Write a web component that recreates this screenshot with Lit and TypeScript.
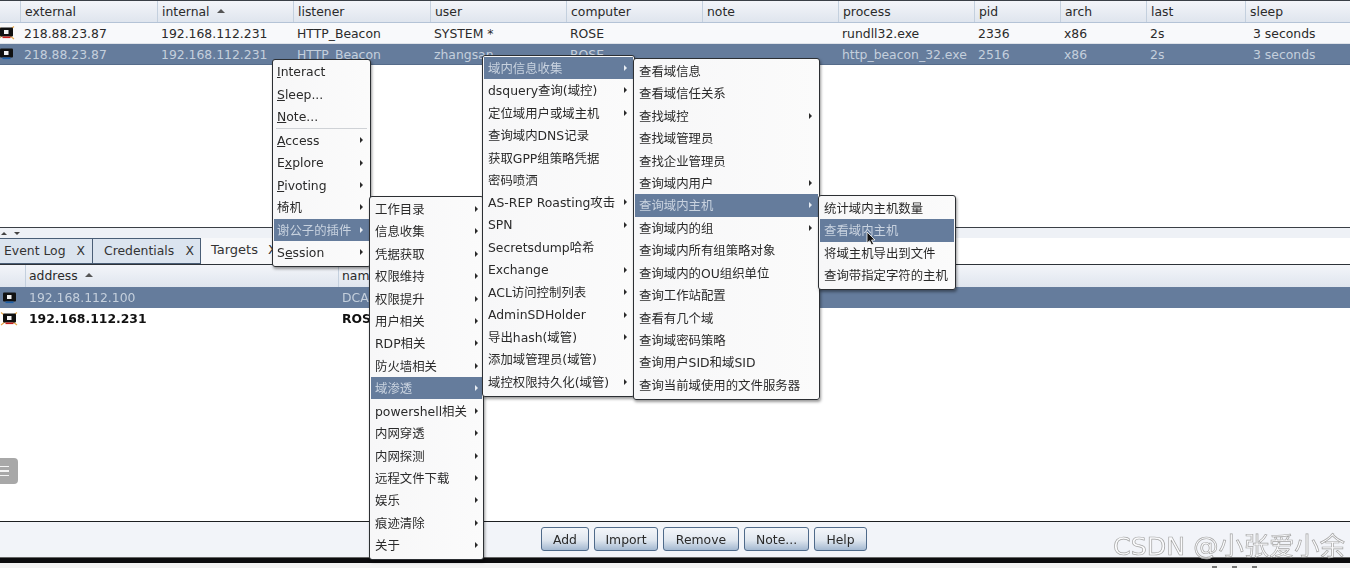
import { LitElement, html, css, svg } from "lit";
import { customElement } from "lit/decorators.js";

type Item = { t: string; sub?: boolean; sel?: boolean; sep?: boolean };
const I = (t: string, sub = false, sel = false): Item => ({ t, sub, sel });

const label = (t: string) => {
  const i = t.indexOf("_");
  if (i < 0) return t;
  return html`${t.slice(0, i)}<u>${t[i + 1]}</u>${t.slice(i + 2)}`;
};

const monitor = (flag: boolean, sel: boolean) => html`<svg class="mon" width="18" height="14" viewBox="0 0 18 14">
  ${flag
    ? svg`<path d="M1 0.5 L17 13 M17 0.5 L1 13" stroke="#e8a84a" stroke-width="1.2" />`
    : ""}
  <rect x="3" y="1.5" width="13" height="9" rx="1" fill="#111" />
  <rect x="7" y="4" width="4.5" height="4" fill="#f2f2f2" />
  <rect x="5.5" y="10.5" width="8" height="1.6" fill="${sel ? "#1d5fa8" : "#c8201c"}" />
</svg>`;

const MENUS: { cls: string; items: Item[] }[] = [
  {
    cls: "m1",
    items: [
      I("_Interact"), I("_Sleep..."), I("_Note..."), { t: "", sep: true },
      I("_Access", true), I("E_xplore", true), I("_Pivoting", true), I("椅机", true),
      I("谢公子的插件", true, true), I("S_ession", true),
    ],
  },
  {
    cls: "m2",
    items: [
      I("工作目录", true), I("信息收集", true), I("凭据获取", true), I("权限维持", true),
      I("权限提升", true), I("用户相关", true), I("RDP相关", true), I("防火墙相关", true),
      I("域渗透", true, true), I("powershell相关", true), I("内网穿透", true), I("内网探测", true),
      I("远程文件下载", true), I("娱乐", true), I("痕迹清除", true), I("关于", true),
    ],
  },
  {
    cls: "m3",
    items: [
      I("域内信息收集", true, true), I("dsquery查询(域控)", true), I("定位域用户或域主机", true),
      I("查询域内DNS记录"), I("获取GPP组策略凭据"), I("密码喷洒"), I("AS-REP Roasting攻击", true),
      I("SPN", true), I("Secretsdump哈希"), I("Exchange", true), I("ACL访问控制列表", true),
      I("AdminSDHolder", true), I("导出hash(域管)", true), I("添加域管理员(域管)"),
      I("域控权限持久化(域管)", true),
    ],
  },
  {
    cls: "m4",
    items: [
      I("查看域信息"), I("查看域信任关系"), I("查找域控", true), I("查找域管理员"), I("查找企业管理员"),
      I("查询域内用户", true), I("查询域内主机", true, true), I("查询域内的组", true),
      I("查询域内所有组策略对象"), I("查询域内的OU组织单位"), I("查询工作站配置"), I("查看有几个域"),
      I("查询域密码策略"), I("查询用户SID和域SID"), I("查询当前域使用的文件服务器"),
    ],
  },
  {
    cls: "m5",
    items: [
      I("统计域内主机数量"), I("查看域内主机", false, true), I("将域主机导出到文件"), I("查询带指定字符的主机"),
    ],
  },
];

const COLS = ["external", "internal", "listener", "user", "computer", "note", "process", "pid", "arch", "last", "sleep"];
const ROWS = [
  { flag: true, sel: false, c: ["218.88.23.87", "192.168.112.231", "HTTP_Beacon", "SYSTEM *", "ROSE", "", "rundll32.exe", "2336", "x86", "2s", "3 seconds"] },
  { flag: false, sel: true, c: ["218.88.23.87", "192.168.112.231", "HTTP_Beacon", "zhangsan", "ROSE", "", "http_beacon_32.exe", "2516", "x86", "2s", "3 seconds"] },
];

@customElement("app-root")
export class AppRoot extends LitElement {
  static styles = css`
    :host {
      display: block;
      width: 1350px;
      height: 568px;
      overflow: hidden;
      position: relative;
      background: #fff;
      font-family: "DejaVu Sans", "Noto Sans CJK SC", sans-serif;
      font-size: 12.4px;
      color: #2a2a2a;
    }
    .page {
      height: 568px;
      display: flex;
      flex-direction: column;
      filter: blur(0.4px);
    }
    .top {
      height: 227px;
      border-top: 1px solid #3a3f46;
      box-sizing: border-box;
    }
    .thead, .trow {
      display: grid;
      grid-template-columns: 20px 137px 136px 137px 136px 136px 136px 136px 86px 86px 99px 1fr;
      align-items: center;
      white-space: nowrap;
    }
    .thead {
      height: 21px;
      background: linear-gradient(#f3f5f9, #dfe5ee);
      border-bottom: 1px solid #b4c3d6;
    }
    .thead > div {
      height: 100%;
      display: flex;
      align-items: center;
      padding-left: 4px;
      box-sizing: border-box;
      border-left: 1px solid #c4d0de;
    }
    .thead > div:first-child { border-left: none; }
    .sort::after {
      content: "";
      margin-left: 7px;
      margin-bottom: 2px;
      border-left: 4px solid transparent;
      border-right: 4px solid transparent;
      border-bottom: 4px solid #555;
    }
    .trow {
      height: 21px;
      background: #f8f9fb;
      border-bottom: 1px solid #dfe3e9;
      box-sizing: border-box;
    }
    .trow > div {
      padding-left: 4px;
      overflow: hidden;
    }
    .trow > .ic { padding-left: 0; height: 14px; }
    .mon { display: block; margin-left: -3px; }
    .trow.sel {
      background: #657c9c;
      color: #c4cfdc;
      border-bottom: 1px solid #566c8a;
    }
    .trow > .sl { padding-left: 8px; }
    .split {
      background: #eef1f6;
      border-top: 1px solid #3a3f46;
      box-sizing: border-box;
      height: 11px;
      display: flex;
      gap: 7px;
      padding-left: 1px;
      align-items: center;
    }
    .au, .ad {
      width: 0;
      border-left: 3px solid transparent;
      border-right: 3px solid transparent;
    }
    .au { border-bottom: 3px solid #444; }
    .ad { border-top: 3px solid #444; }
    .tabs {
      height: 27px;
      display: flex;
      background: #fff;
      border-bottom: 1px solid #2d3238;
      box-sizing: border-box;
    }
    .tab {
      display: flex;
      align-items: center;
      justify-content: space-between;
      box-sizing: border-box;
      padding: 0 7px 2px 4px;
      background: #dbe4ef;
      border: 1px solid #4a5e76;
      border-left: none;
      color: #333;
    }
    .t1 { width: 93px; }
    .t2 { width: 108px; padding-left: 11px; padding-right: 6px; }
    .t3 {
      width: 80px;
      background: #f7f8fa;
      border: none;
      padding: 0 4px 4px 10px;
      font-size: 13px;
    }
    .h2, .r2 {
      display: grid;
      grid-template-columns: 25px 313px 1fr;
      align-items: center;
      white-space: nowrap;
    }
    .h2 {
      height: 22px;
      background: linear-gradient(#f3f5f9, #dfe5ee);
    }
    .h2 > div {
      height: 100%;
      display: flex;
      align-items: center;
      padding: 0 0 1px 3px;
      box-sizing: border-box;
      border-left: 1px solid #c4d0de;
    }
    .h2 > div:first-child { border-left: none; }
    .r2 { height: 21px; }
    .r2 > div { padding-left: 4px; }
    .r2 > .ic { padding-left: 0; height: 14px; }
    .r2 .mon { margin-left: 0; }
    .r2.sel { background: #657c9c; color: #c4cfdc; }
    .r2.bold { font-weight: 700; color: #111; }
    .fill { flex: 1; }
    .tools {
      height: 36px;
      background: #f2f4f9;
      border-top: 1px solid #1d1f22;
      box-sizing: border-box;
      display: flex;
      justify-content: center;
      align-items: flex-start;
      gap: 5px;
      padding: 5px 0 0 58px;
    }
    .btn {
      height: 24px;
      box-sizing: border-box;
      border: 1px solid #4f6a8a;
      border-radius: 3px;
      background: linear-gradient(#f4f6fa 0%, #dfe6ef 55%, #a4b9d1 100%);
      display: flex;
      align-items: center;
      justify-content: center;
      color: #2a2a2a;
    }
    .bar {
      height: 6px;
      background: #0c0c0e;
      border-top: 1px solid #666;
      box-sizing: border-box;
    }
    .foot { height: 5px; background: #f3f3f3; }

    .menu {
      position: absolute;
      box-sizing: border-box;
      padding: 0.7px 1px 2.7px;
      background: linear-gradient(90deg, #f7f7f8, #fbfbfb);
      border: 1px solid #2c2f33;
      border-radius: 3px;
      box-shadow: 1px 2px 3px rgba(0, 0, 0, 0.4);
      filter: blur(0.35px);
    }
    .m1 { left: 272px; top: 59px; width: 99px; z-index: 1; }
    .m2 { left: 369px; top: 196px; width: 115px; z-index: 2; }
    .m3 { left: 482px; top: 55px; width: 153px; z-index: 3; }
    .m4 { left: 633px; top: 58px; width: 187px; z-index: 4; }
    .m5 { left: 818px; top: 195px; width: 138px; z-index: 5; }
    .item {
      height: 22.43px;
      display: flex;
      align-items: center;
      justify-content: space-between;
      padding: 0 6px 0 4px;
      white-space: nowrap;
      color: #2a2a2a;
    }
    .m1 .item { padding-left: 3px; }
    .m2 .item { padding-right: 4px; }
    .item.sel { background: #657c9c; color: #c8d2df; }
    .arrow {
      width: 0;
      border-top: 3px solid transparent;
      border-bottom: 3px solid transparent;
      border-left: 3px solid #2a2a2a;
    }
    .sel .arrow { border-left-color: #e8edf3; }
    .sep { height: 1px; margin: 0 2px; background: #cfd2d6; }

    .handle {
      position: absolute;
      left: -6px;
      top: 458px;
      width: 24px;
      height: 26px;
      border-radius: 4px;
      background: #a8a8a8;
      display: flex;
      flex-direction: column;
      justify-content: center;
      gap: 3px;
      align-items: flex-end;
      padding-right: 9px;
      box-sizing: border-box;
    }
    .handle i { display: block; width: 9px; height: 1.6px; background: #f4f4f4; }
    .mark {
      position: absolute;
      left: 1113px;
      top: 526px;
      font-size: 25.3px;
      white-space: nowrap;
      color: rgba(255, 255, 255, 0.65);
      -webkit-text-stroke: 0.7px #a4a4a4;
      z-index: 6;
    }
    .cursor { position: absolute; left: 866px; top: 231px; z-index: 7; }
    .dots {
      position: absolute;
      left: 1212px;
      top: 566px;
      display: flex;
      gap: 15px;
    }
    .dots i { display: block; width: 5px; height: 2px; background: #777; }
  `;

  private menu(m: { cls: string; items: Item[] }) {
    return html`<div class="menu ${m.cls}">
      ${m.items.map((it) =>
        it.sep
          ? html`<div class="sep"></div>`
          : html`<div class="item ${it.sel ? "sel" : ""}">
              <span>${label(it.t)}</span>${it.sub ? html`<span class="arrow"></span>` : ""}
            </div>`
      )}
    </div>`;
  }

  render() {
    return html`
      <div class="page">
        <div class="top">
          <div class="thead">
            <div></div>
            ${COLS.map((c) => html`<div class="${c === "internal" ? "sort" : ""}">${c}</div>`)}
          </div>
          ${ROWS.map(
            (r) => html`<div class="trow ${r.sel ? "sel" : ""}">
              <div class="ic">${monitor(r.flag, r.sel)}</div>
              ${r.c.map((v, i) => html`<div class="${i === 10 ? "sl" : ""}">${v}</div>`)}
            </div>`
          )}
        </div>
        <div class="split"><span class="au"></span><span class="ad"></span></div>
        <div class="tabs">
          <div class="tab t1"><span>Event Log</span><span>X</span></div>
          <div class="tab t2"><span>Credentials</span><span>X</span></div>
          <div class="tab t3"><span>Targets</span><span>X</span></div>
        </div>
        <div class="h2">
          <div></div>
          <div class="sort">address</div>
          <div>name</div>
        </div>
        <div class="r2 sel">
          <div class="ic">${monitor(false, true)}</div>
          <div>192.168.112.100</div>
          <div>DCA</div>
        </div>
        <div class="r2 bold">
          <div class="ic">${monitor(true, false)}</div>
          <div>192.168.112.231</div>
          <div>ROSE</div>
        </div>
        <div class="fill"></div>
        <div class="tools">
          <div class="btn" style="width:48px">Add</div>
          <div class="btn" style="width:64px">Import</div>
          <div class="btn" style="width:76px">Remove</div>
          <div class="btn" style="width:65px">Note...</div>
          <div class="btn" style="width:53px">Help</div>
        </div>
        <div class="bar"></div>
        <div class="foot"></div>
      </div>
      ${MENUS.map((m) => this.menu(m))}
      <div class="handle"><i></i><i></i><i></i></div>
      <div class="mark">CSDN @小张爱小余</div>
      <div class="dots"><i></i><i></i><i></i></div>
      <svg class="cursor" width="12" height="16" viewBox="0 0 12 16">
        <path d="M1 1 L1 12 L3.6 9.8 L5.6 14 L7.6 13 L5.6 9 L9 9 Z" fill="#111" stroke="#fff" stroke-width="0.8" />
      </svg>
    `;
  }
}
